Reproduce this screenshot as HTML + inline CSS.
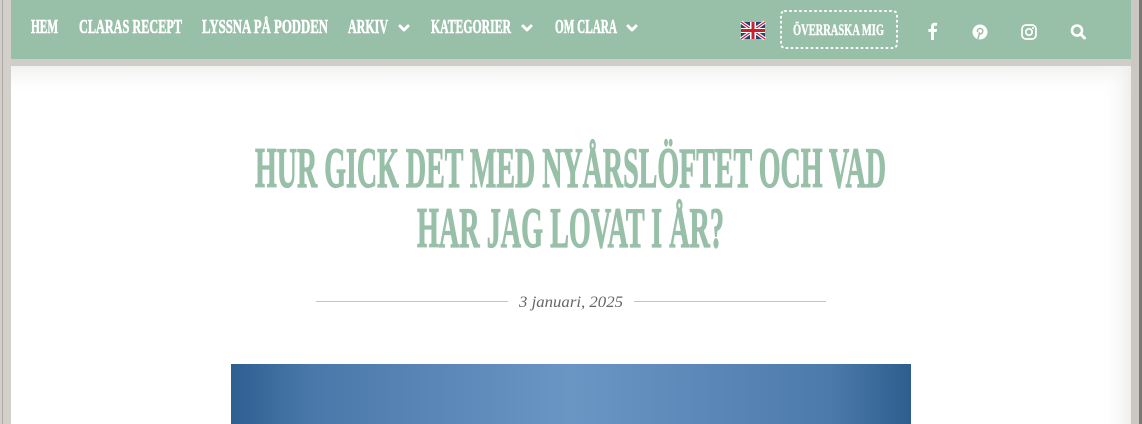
<!DOCTYPE html>
<html><head><meta charset="utf-8"><style>
html,body{margin:0;padding:0;width:1142px;height:424px;overflow:hidden;background:#fff}
svg{display:block}
</style></head><body>
<svg width="1142" height="424" viewBox="0 0 1142 424" xmlns="http://www.w3.org/2000/svg">
<defs>
<linearGradient id="img" x1="0" x2="1" y1="0" y2="0">
<stop offset="0" stop-color="#2e5f92"/><stop offset="0.12" stop-color="#4a78aa"/>
<stop offset="0.5" stop-color="#6a96c4"/><stop offset="0.88" stop-color="#4c7aab"/><stop offset="1" stop-color="#2d5e8f"/>
</linearGradient>
<linearGradient id="shadeR" x1="0" x2="1"><stop offset="0" stop-color="#fff" stop-opacity="0"/><stop offset="1" stop-color="#eeeeec"/></linearGradient>
<linearGradient id="shadeT" x1="0" x2="0" y1="0" y2="1"><stop offset="0" stop-color="#f0f0ee"/><stop offset="1" stop-color="#fff" stop-opacity="0"/></linearGradient>
</defs>
<rect x="0" y="0" width="1142" height="424" fill="#fff"/>
<rect x="0" y="0" width="11" height="424" fill="#d3cfcb"/>
<rect x="2" y="0" width="1" height="424" fill="#b0aca8"/>
<rect x="1131" y="0" width="11" height="424" fill="#cbc7c3"/>
<rect x="1139" y="0" width="3" height="424" fill="#7a7774"/>
<rect x="11" y="59" width="1120" height="7" fill="#d0ccc8"/>
<rect x="11" y="66" width="1120" height="30" fill="url(#shadeT)"/>
<rect x="1100" y="66" width="31" height="358" fill="url(#shadeR)"/>
<rect x="11" y="0" width="1120" height="59" fill="#98bfa8"/>
<g fill="#fff" stroke="#fff" stroke-width="0.6" font-family="Liberation Serif, serif" font-weight="bold" font-size="20">
<text x="31" y="33" textLength="27" lengthAdjust="spacingAndGlyphs">HEM</text>
<text x="79" y="33" textLength="103" lengthAdjust="spacingAndGlyphs">CLARAS RECEPT</text>
<text x="202" y="33" textLength="126" lengthAdjust="spacingAndGlyphs">LYSSNA PÅ PODDEN</text>
<text x="348" y="33" textLength="40" lengthAdjust="spacingAndGlyphs">ARKIV</text>
<text x="431" y="33" textLength="80" lengthAdjust="spacingAndGlyphs">KATEGORIER</text>
<text x="555" y="33" textLength="62" lengthAdjust="spacingAndGlyphs">OM CLARA</text>
<text x="793" y="35" font-size="16" stroke-width="0.4" textLength="91" lengthAdjust="spacingAndGlyphs">ÖVERRASKA MIG</text>
</g>
<g stroke="#fff" stroke-width="3" fill="none" stroke-linecap="round" stroke-linejoin="round">
<path d="M400 26l4 4 4-4"/><path d="M523 26l4 4 4-4"/><path d="M628 26l4 4 4-4"/>
</g>
<rect x="781" y="11" width="116" height="37" rx="4" fill="none" stroke="#fff" stroke-width="2" stroke-dasharray="1 4" stroke-linecap="round"/>
<g>
<rect x="741" y="22" width="24" height="17" fill="#2c3f7a"/>
<path d="M741 22L765 39M765 22L741 39" stroke="#fff" stroke-width="3.5"/>
<path d="M741 22L765 39M765 22L741 39" stroke="#c8202f" stroke-width="1.2"/>
<rect x="741" y="28" width="24" height="5" fill="#fff"/><rect x="750" y="22" width="6" height="17" fill="#fff"/>
<rect x="741" y="29" width="24" height="3" fill="#c8202f"/><rect x="751.5" y="22" width="3" height="17" fill="#c8202f"/>
</g>
<path d="M934 40v-8h2.6l.4-3h-3v-2c0-.9.3-1.4 1.5-1.4h1.6v-2.7c-.3 0-1.2-.1-2.3-.1-2.3 0-3.8 1.4-3.8 3.9v2.3h-2.6v3h2.6v8z" fill="#fff"/>
<circle cx="980" cy="32" r="7.5" fill="#fff"/>
<path d="M979.5 28.5c2.5-.3 3.5 1.3 3.3 2.8-.2 1.6-1.3 2.7-2.4 2.5-.7-.1-1-.6-1-.6l-1.2 5" stroke="#98bfa8" stroke-width="1.5" fill="none" stroke-linecap="round"/>
<path d="M977.6 32.2c-.6-1.8.2-3.3 1.9-3.7" stroke="#98bfa8" stroke-width="1.4" fill="none"/>
<rect x="1022" y="25" width="14" height="14" rx="4" fill="none" stroke="#fff" stroke-width="1.7"/>
<circle cx="1029" cy="32" r="3.2" fill="none" stroke="#fff" stroke-width="1.7"/>
<circle cx="1033" cy="28" r="1" fill="#fff"/>
<circle cx="1077" cy="30.5" r="5" fill="none" stroke="#fff" stroke-width="2.6"/>
<path d="M1080.5 34l4 4" stroke="#fff" stroke-width="3" stroke-linecap="round"/>
<g fill="#98bfa8" stroke="#98bfa8" stroke-width="1.2" font-family="Liberation Serif, serif" font-weight="bold" font-size="57">
<text x="255" y="187" textLength="631" lengthAdjust="spacingAndGlyphs">HUR GICK DET MED NYÅRSLÖFTET OCH VAD</text>
<text x="417" y="247" textLength="307" lengthAdjust="spacingAndGlyphs">HAR JAG LOVAT I ÅR?</text>
</g>
<rect x="316" y="301" width="192" height="1" fill="#c4c4c4"/>
<rect x="634" y="301" width="192" height="1" fill="#c4c4c4"/>
<text x="519" y="307" font-family="Liberation Serif, serif" font-style="italic" font-size="16" fill="#666" textLength="104" lengthAdjust="spacingAndGlyphs">3 januari, 2025</text>
<rect x="231" y="364" width="680" height="60" fill="url(#img)"/>
</svg>
</body></html>
